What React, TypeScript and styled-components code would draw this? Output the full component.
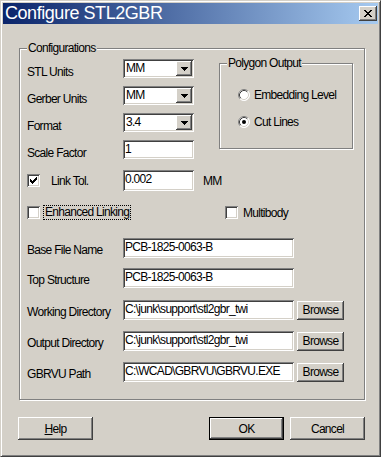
import React from "react"
import styled, { createGlobalStyle } from "styled-components"

const face = "#D4D0C8"
const raised = `inset -1px -1px #404040, inset 1px 1px #fff, inset -2px -2px #808080, inset 2px 2px ${face}`
const sunken = `inset 1px 1px #808080, inset -1px -1px #fff, inset 2px 2px #404040, inset -2px -2px ${face}`

const GlobalStyle = createGlobalStyle`
    html, body {
        margin: 0;
        padding: 0;
        background: #fff;
    }
    body {
        font-family: "Liberation Sans", Arial, sans-serif;
        font-size: 12px;
        letter-spacing: -0.7px;
        color: #000;
    }
`

const Window = styled.div`
    box-sizing: border-box;
    width: 381px;
    height: 457px;
    padding: 2px;
    background: ${face};
    border: 1px solid;
    border-color: ${face} #404040 #404040 ${face};
    box-shadow: inset 1px 1px #fff, inset -1px -1px #808080;
    display: flex;
    flex-direction: column;
`

const TitleBar = styled.div`
    height: 21px;
    flex: none;
    display: flex;
    align-items: center;
    justify-content: space-between;
    padding: 0 1px 0 2px;
    background: linear-gradient(to right, #0a246a, #a6caf0);
`

const Title = styled.span`
    color: #fff;
    font-size: 18px;
    letter-spacing: -0.45px;
    line-height: 21px;
`

const CloseButton = styled.span`
    width: 18px;
    height: 15px;
    display: flex;
    align-items: center;
    justify-content: center;
    padding-right: 1px;
    box-sizing: border-box;
    background: ${face};
    box-shadow: ${raised};
`

const Group = styled.div<{ $w: number; $h: number }>`
    position: relative;
    box-sizing: border-box;
    flex: none;
    width: ${(p) => p.$w}px;
    height: ${(p) => p.$h}px;
    border: 1px solid #808080;
    box-shadow: inset 1px 1px #fff, 1px 1px #fff;
`

const Caption = styled.span`
    position: absolute;
    left: 7px;
    top: -8px;
    padding: 0 1px;
    line-height: 14px;
    background: ${face};
    white-space: nowrap;
`

const ConfigGroup = styled(Group)`
    margin: 24px 0 0 16px;
    padding: 10px 0 0 7px;
`

const TopSection = styled.div`
    display: flex;
`

const LeftColumn = styled.div`
    width: 192px;
    flex: none;
    display: flex;
    flex-direction: column;
`

const Row = styled.div<{ $mt: number; $h: number }>`
    display: flex;
    align-items: center;
    flex: none;
    height: ${(p) => p.$h}px;
    margin-top: ${(p) => p.$mt}px;
`

const Label = styled.span<{ $w: number; $dy?: number }>`
    width: ${(p) => p.$w}px;
    flex: none;
    line-height: 14px;
    padding-top: ${(p) => (p.$dy ?? 0) * 2}px;
    white-space: nowrap;
`

const Field = styled.div<{ $w: number; $h: number }>`
    box-sizing: border-box;
    flex: none;
    width: ${(p) => p.$w}px;
    height: ${(p) => p.$h}px;
    padding: 2px 2px 0 2px;
    background: #fff;
    box-shadow: ${sunken};
    line-height: 14px;
    white-space: nowrap;
    overflow: hidden;
`

const Combo = styled.div`
    box-sizing: border-box;
    flex: none;
    width: 71px;
    height: 19px;
    padding: 2px;
    display: flex;
    background: #fff;
    box-shadow: ${sunken};
`

const ComboValue = styled.span`
    flex: 1;
    padding-left: 1px;
    line-height: 15px;
`

const ComboButton = styled.span`
    width: 16px;
    display: flex;
    align-items: center;
    justify-content: center;
    background: ${face};
    box-shadow: ${raised};
`

const Box = styled.span`
    box-sizing: border-box;
    flex: none;
    width: 13px;
    height: 13px;
    display: flex;
    align-items: center;
    justify-content: center;
    background: #fff;
    box-shadow: ${sunken};
`

const FocusLabel = styled.span`
    margin-left: 3px;
    padding: 0 1px;
    line-height: 13px;
    border: 1px dotted #000;
`

const CheckCell = styled.div<{ $w?: number }>`
    display: flex;
    align-items: center;
    width: ${(p) => (p.$w ? `${p.$w}px` : "auto")};
    flex: none;
`

const Side = styled.span<{ $ml: number }>`
    margin-left: ${(p) => p.$ml}px;
    line-height: 14px;
    white-space: nowrap;
`

const PolygonGroup = styled(Group)`
    margin-top: 4px;
    padding: 24px 0 0 18px;
    display: flex;
    flex-direction: column;
    gap: 13px;
`

const RadioRow = styled.div`
    display: flex;
    align-items: center;
    gap: 4px;
    height: 14px;
`

const Button = styled.div<{ $w: number; $h: number; $default?: boolean; $ml?: number }>`
    box-sizing: border-box;
    flex: none;
    width: ${(p) => p.$w}px;
    height: ${(p) => p.$h}px;
    margin-left: ${(p) => p.$ml ?? 0}px;
    display: flex;
    align-items: center;
    justify-content: center;
    background: ${face};
    box-shadow: ${raised};
    border: ${(p) => (p.$default ? "1px solid #000" : "none")};
    line-height: 14px;
`

const ButtonBar = styled.div`
    display: flex;
    margin-top: 17px;
    padding-left: 15px;
`

const ButtonGroup = styled.div`
    display: flex;
    gap: 6px;
    margin-left: 116px;
`

const CloseGlyph = () => (
    <svg width="8" height="7" viewBox="0 0 8 7">
        <path
            d="M0 0h2v1h-2zM6 0h2v1h-2zM1 1h2v1h-2zM5 1h2v1h-2zM2 2h4v1h-4zM3 3h2v1h-2zM2 4h4v1h-4zM1 5h2v1h-2zM5 5h2v1h-2zM0 6h2v1h-2zM6 6h2v1h-2z"
            fill="#000"
        />
    </svg>
)

const Arrow = () => (
    <svg width="7" height="4" viewBox="0 0 7 4">
        <path d="M0 0H7V1H6V2H5V3H4V4H3V3H2V2H1V1H0Z" fill="#000" />
    </svg>
)

const checkCols = [2, 3, 4, 3, 2, 1, 0]

const CheckBox: React.FC<{ checked?: boolean }> = ({ checked }) => (
    <Box>
        {checked && (
            <svg width="7" height="7" viewBox="0 0 7 7">
                {checkCols.map((y, x) => (
                    <rect key={x} x={x} y={y} width="1" height="3" fill="#000" />
                ))}
            </svg>
        )}
    </Box>
)

const Radio: React.FC<{ checked?: boolean }> = ({ checked }) => (
    <svg width="12" height="12" viewBox="0 0 12 12">
        <circle cx="6" cy="6" r="5.5" fill="#fff" />
        <path d="M2.11 9.89A5.5 5.5 0 0 1 9.89 2.11" stroke="#808080" fill="none" />
        <path d="M9.89 2.11A5.5 5.5 0 0 1 2.11 9.89" stroke="#fff" fill="none" />
        <path d="M2.82 9.18A4.5 4.5 0 0 1 9.18 2.82" stroke="#404040" fill="none" />
        <path d="M9.18 2.82A4.5 4.5 0 0 1 2.82 9.18" stroke={face} fill="none" />
        {checked && <circle cx="6" cy="6" r="2" fill="#000" />}
    </svg>
)

const units = [
    { label: "STL Units", value: "MM", mt: 0 },
    { label: "Gerber Units", value: "MM", mt: 8 },
    { label: "Format", value: "3.4", mt: 8 },
]

const paths = [
    { label: "Base File Name", value: "PCB-1825-0063-B", mt: 18, browse: false },
    { label: "Top Structure", value: "PCB-1825-0063-B", mt: 10, browse: false },
    { label: "Working Directory", value: "C:\\junk\\support\\stl2gbr_twi", mt: 12, browse: true },
    { label: "Output Directory", value: "C:\\junk\\support\\stl2gbr_twi", mt: 11, browse: true },
    { label: "GBRVU Path", value: "C:\\WCAD\\GBRVU\\GBRVU.EXE", mt: 11, browse: true },
]

export default function App() {
    return (
        <>
            <GlobalStyle />
            <Window>
                <TitleBar>
                    <Title>Configure STL2GBR</Title>
                    <CloseButton>
                        <CloseGlyph />
                    </CloseButton>
                </TitleBar>

                <ConfigGroup $w={346} $h={352}>
                    <Caption>Configurations</Caption>
                    <TopSection>
                        <LeftColumn>
                            {units.map((u) => (
                                <Row key={u.label} $mt={u.mt} $h={19}>
                                    <Label $w={96} $dy={3}>
                                        {u.label}
                                    </Label>
                                    <Combo>
                                        <ComboValue>{u.value}</ComboValue>
                                        <ComboButton>
                                            <Arrow />
                                        </ComboButton>
                                    </Combo>
                                </Row>
                            ))}
                            <Row $mt={8} $h={19}>
                                <Label $w={96} $dy={3}>
                                    Scale Factor
                                </Label>
                                <Field $w={71} $h={19}>
                                    1
                                </Field>
                            </Row>
                        </LeftColumn>
                        <PolygonGroup $w={134} $h={86}>
                            <Caption>Polygon Output</Caption>
                            <RadioRow>
                                <Radio />
                                <span>Embedding Level</span>
                            </RadioRow>
                            <RadioRow>
                                <Radio checked />
                                <span>Cut Lines</span>
                            </RadioRow>
                        </PolygonGroup>
                    </TopSection>

                    <Row $mt={11} $h={21}>
                        <CheckBox checked />
                        <Label $w={72} style={{ marginLeft: 11 }}>
                            Link Tol.
                        </Label>
                        <Field $w={71} $h={21}>
                            0.002
                        </Field>
                        <Side $ml={9}>MM</Side>
                    </Row>

                    <Row $mt={14} $h={15}>
                        <CheckCell $w={198}>
                            <CheckBox />
                            <FocusLabel>Enhanced Linking</FocusLabel>
                        </CheckCell>
                        <CheckCell>
                            <CheckBox />
                            <Side $ml={5}>Multibody</Side>
                        </CheckCell>
                    </Row>

                    {paths.map((p) => (
                        <Row key={p.label} $mt={p.mt} $h={20}>
                            <Label $w={96} $dy={2}>
                                {p.label}
                            </Label>
                            <Field $w={171} $h={20}>
                                {p.value}
                            </Field>
                            {p.browse && (
                                <Button $w={47} $h={19} $ml={3}>
                                    Browse
                                </Button>
                            )}
                        </Row>
                    ))}
                </ConfigGroup>

                <ButtonBar>
                    <Button $w={75} $h={23}>
                        <span>
                            <u>H</u>elp
                        </span>
                    </Button>
                    <ButtonGroup>
                        <Button $w={75} $h={23} $default>
                            OK
                        </Button>
                        <Button $w={75} $h={23}>
                            Cancel
                        </Button>
                    </ButtonGroup>
                </ButtonBar>
            </Window>
        </>
    )
}
